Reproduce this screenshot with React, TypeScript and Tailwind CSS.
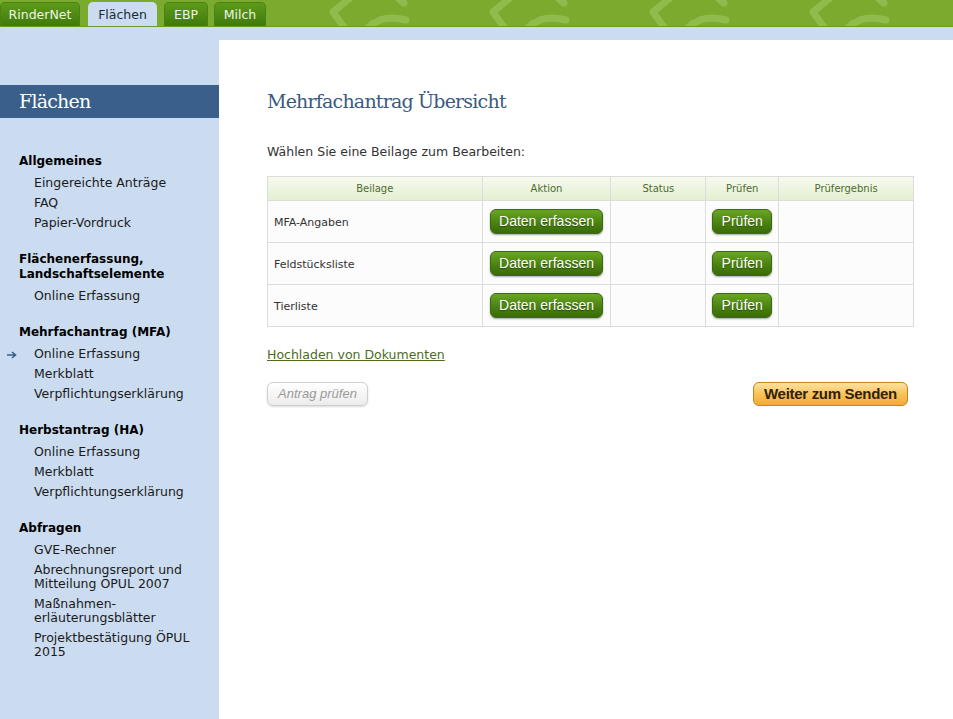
import React from "react";

const tabs = [
  { t: "RinderNet", w: "w-[80px]" },
  { t: "Flächen", w: "w-[69px]" },
  { t: "EBP", w: "w-[44px]" },
  { t: "Milch", w: "w-[52px]" },
];

const sections = [
  {
    title: ["Allgemeines"],
    items: [["Eingereichte Anträge"], ["FAQ"], ["Papier-Vordruck"]],
  },
  {
    title: ["Flächenerfassung,", "Landschaftselemente"],
    items: [["Online Erfassung"]],
  },
  {
    title: ["Mehrfachantrag (MFA)"],
    items: [["Online Erfassung"], ["Merkblatt"], ["Verpflichtungserklärung"]],
    active: 0,
  },
  {
    title: ["Herbstantrag (HA)"],
    items: [["Online Erfassung"], ["Merkblatt"], ["Verpflichtungserklärung"]],
  },
  {
    title: ["Abfragen"],
    items: [
      ["GVE-Rechner"],
      ["Abrechnungsreport und", "Mitteilung ÖPUL 2007"],
      ["Maßnahmen-", "erläuterungsblätter"],
      ["Projektbestätigung ÖPUL", "2015"],
    ],
  },
];

const rows = ["MFA-Angaben", "Feldstücksliste", "Tierliste"];

function HeaderPattern() {
  // light leaf/chevron motif repeated across the green bar
  const xs = [328, 488, 648, 808, 968];
  return (
    <svg className="absolute inset-0 pointer-events-none" width="953" height="27">
      {xs.map((x) => (
        <g key={x} fill="none" stroke="#93c052" strokeWidth="7" strokeLinecap="round" strokeLinejoin="round" opacity="0.85">
          <path d={`M${x + 22} -2 L${x + 5} 12 L${x + 18} 30`} />
          <path d={`M${x + 38} 30 C${x + 48} 18, ${x + 62} 16, ${x + 78} 20`} />
          <path d={`M${x + 70} -2 L${x + 76} 3`} />
        </g>
      ))}
    </svg>
  );
}

function GreenButton({ label, w }: { label: string; w: string }) {
  return (
    <button
      className={`${w} h-[25px] rounded-[6px] border border-[#3c6a0e] bg-gradient-to-b from-[#6aa624] via-[#4d8612] to-[#3a6a08] text-white text-[14px] font-['Liberation_Sans',sans-serif] shadow-[0_1px_2px_rgba(0,0,0,0.35)] [text-shadow:0_1px_1px_rgba(0,0,0,0.4)]`}
    >
      {label}
    </button>
  );
}

export default function App() {
  return (
    <div className="min-h-screen flex flex-col bg-[#cbdcf0] font-['DejaVu_Sans',sans-serif] text-[#1a1a1a]">
      {/* top bar */}
      <header className="relative h-[27px] bg-[#7aab2e] border-b border-[#6b9a26] overflow-hidden">
        <HeaderPattern />
        <nav className="relative flex items-end h-full">
          {tabs.map(({ t, w }, i) => {
            const active = t === "Flächen";
            const gap = i === 0 ? "" : i === 3 ? "ml-[6px]" : i === 2 ? "ml-[7px]" : "ml-[8px]";
            return (
              <div
                key={t}
                className={
                  active
                    ? `${w} ${gap} h-[25px] -mb-px pt-[2px] flex items-center justify-center rounded-t-[5px] bg-[#cbdcf0] text-[#1a2a3a] text-[12.5px]`
                    : `${w} ${gap} h-[24px] pt-[1px] flex items-center justify-center rounded-t-[5px] bg-gradient-to-b from-[#5e9a1a] to-[#3f7a0c] border border-b-0 border-[#4c8212] text-[#eef5e4] text-[12.5px]`
                }
              >
                {t}
              </div>
            );
          })}
        </nav>
      </header>
      <div className="h-[13px]" />

      <div className="flex flex-1">
        {/* sidebar */}
        <aside className="w-[219px] shrink-0 pt-[45px] pb-8">
          <div className="h-[33px] bg-[#3a5f8a] flex items-center pl-[19px]">
            <span className="text-white text-[19px] font-['DejaVu_Serif',serif] tracking-[-0.8px]">Flächen</span>
          </div>
          <div className="pt-[36px]">
            {sections.map((s, i) => (
              <div key={i} className={i === 0 ? "" : "mt-[19px]"}>
                <div className="pl-[19px] font-bold text-[12px] leading-[15px] text-black mb-[4px]">
                  {s.title.map((l) => (
                    <div key={l}>{l}</div>
                  ))}
                </div>
                {s.items.map((it, j) => (
                  <div key={j} className="relative pl-[34px] py-[3px] text-[12.5px] leading-[14px]">
                    {s.active === j && (
                      <svg className="absolute left-[7px] top-[7px]" width="10" height="8" viewBox="0 0 10 8">
                        <path d="M0 4 H8 M5 1 L8.5 4 L5 7" stroke="#3a5f8a" strokeWidth="1.6" fill="none" />
                      </svg>
                    )}
                    {it.map((l) => (
                      <div key={l}>{l}</div>
                    ))}
                  </div>
                ))}
              </div>
            ))}
          </div>
        </aside>

        {/* main */}
        <main className="flex-1 bg-white pl-[48px] pr-[39px] pt-[49px]">
          <h1 className="text-[19px] leading-[24px] text-[#3a5a80] font-['DejaVu_Serif',serif] tracking-[-0.8px]">
            Mehrfachantrag Übersicht
          </h1>
          <p className="mt-[31px] text-[12.5px] leading-[16px] text-[#333]">Wählen Sie eine Beilage zum Bearbeiten:</p>

          <table className="mt-[16px] w-[647px] border-collapse text-[11px]">
            <thead>
              <tr className="h-[24px] bg-gradient-to-b from-[#f6faef] to-[#e2efcf] text-[#4d6b2f] text-[10px]">
                <th className="w-[215px] border border-[#dcdcdc] font-normal">Beilage</th>
                <th className="w-[129px] border border-[#dcdcdc] font-normal">Aktion</th>
                <th className="w-[95px] border border-[#dcdcdc] font-normal">Status</th>
                <th className="w-[73px] border border-[#dcdcdc] font-normal">Prüfen</th>
                <th className="w-[135px] border border-[#dcdcdc] font-normal">Prüfergebnis</th>
              </tr>
            </thead>
            <tbody>
              {rows.map((r) => (
                <tr key={r} className="h-[42px] bg-[#fcfcfc]">
                  <td className="border border-[#dcdcdc] pl-[6px] pt-[3px] text-[#333]">{r}</td>
                  <td className="border border-[#dcdcdc] text-center">
                    <GreenButton label="Daten erfassen" w="w-[113px]" />
                  </td>
                  <td className="border border-[#dcdcdc]" />
                  <td className="border border-[#dcdcdc] text-center">
                    <GreenButton label="Prüfen" w="w-[60px]" />
                  </td>
                  <td className="border border-[#dcdcdc]" />
                </tr>
              ))}
            </tbody>
          </table>

          <a href="#" className="block mt-[20px] w-fit text-[12.5px] leading-[16px] text-[#4d6b1f] underline">
            Hochladen von Dokumenten
          </a>

          <div className="mt-[19px] w-[641px] flex justify-between">
            <button className="w-[101px] h-[24px] rounded-[6px] border border-[#cfcfcf] bg-gradient-to-b from-white to-[#ececec] shadow-[0_1px_2px_rgba(0,0,0,0.15)] text-[13px] italic text-[#9a9a9a] font-['Liberation_Sans',sans-serif]">
              Antrag prüfen
            </button>
            <button className="w-[155px] h-[24px] rounded-[6px] border border-[#c4861c] bg-gradient-to-b from-[#fde2a0] via-[#f9c25a] to-[#f2a93a] text-[15px] font-bold text-[#2e2208] font-['Liberation_Sans',sans-serif] tracking-[-0.3px]">
              Weiter zum Senden
            </button>
          </div>
        </main>
      </div>
    </div>
  );
}
